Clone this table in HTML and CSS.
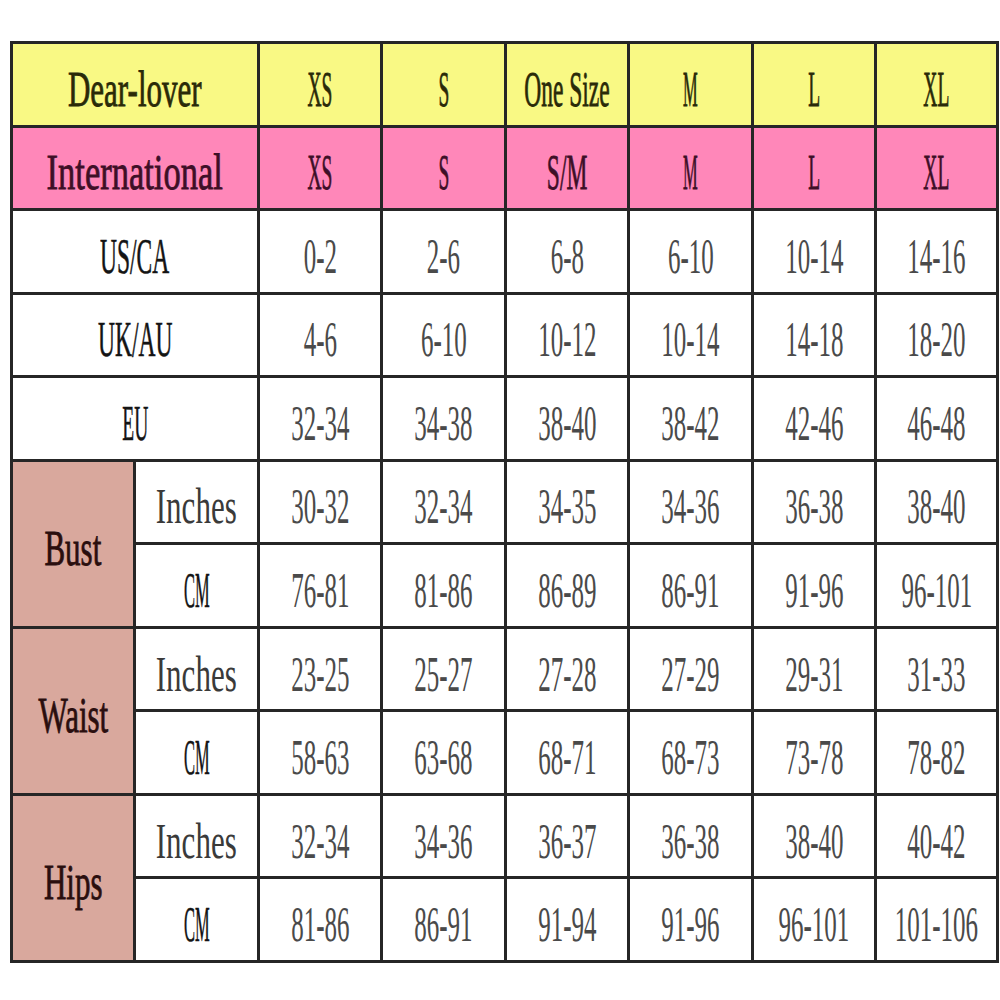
FILE: index.html
```html
<!DOCTYPE html>
<html lang="en">
<head>
<meta charset="utf-8">
<title>Size Chart</title>
<link rel="stylesheet" href="styles.css">
</head>
<body>
<div class="chart">
  <div class="cell yellow span2"><span class="t w">Dear-lover</span></div>
  <div class="cell yellow"><span class="t c2">XS</span></div>
  <div class="cell yellow"><span class="t c2">S</span></div>
  <div class="cell yellow"><span class="t c1">One Size</span></div>
  <div class="cell yellow"><span class="t m">M</span></div>
  <div class="cell yellow"><span class="t c2">L</span></div>
  <div class="cell yellow"><span class="t c2">XL</span></div>

  <div class="cell pink span2"><span class="t wide">International</span></div>
  <div class="cell pink"><span class="t c2">XS</span></div>
  <div class="cell pink"><span class="t c2">S</span></div>
  <div class="cell pink"><span class="t c1">S/M</span></div>
  <div class="cell pink"><span class="t m">M</span></div>
  <div class="cell pink"><span class="t c2">L</span></div>
  <div class="cell pink"><span class="t c2">XL</span></div>

  <div class="cell label span2"><span class="t c1">US/CA</span></div>
  <div class="cell"><span class="t n">0-2</span></div>
  <div class="cell"><span class="t n">2-6</span></div>
  <div class="cell"><span class="t n">6-8</span></div>
  <div class="cell"><span class="t n">6-10</span></div>
  <div class="cell"><span class="t n">10-14</span></div>
  <div class="cell"><span class="t n">14-16</span></div>

  <div class="cell label span2"><span class="t c1">UK/AU</span></div>
  <div class="cell"><span class="t n">4-6</span></div>
  <div class="cell"><span class="t n">6-10</span></div>
  <div class="cell"><span class="t n">10-12</span></div>
  <div class="cell"><span class="t n">10-14</span></div>
  <div class="cell"><span class="t n">14-18</span></div>
  <div class="cell"><span class="t n">18-20</span></div>

  <div class="cell label span2"><span class="t c2">EU</span></div>
  <div class="cell"><span class="t n">32-34</span></div>
  <div class="cell"><span class="t n">34-38</span></div>
  <div class="cell"><span class="t n">38-40</span></div>
  <div class="cell"><span class="t n">38-42</span></div>
  <div class="cell"><span class="t n">42-46</span></div>
  <div class="cell"><span class="t n">46-48</span></div>

  <div class="cell group"><span class="t w">Bust</span></div>
  <div class="cell unit"><span class="t w">Inches</span></div>
  <div class="cell"><span class="t n">30-32</span></div>
  <div class="cell"><span class="t n">32-34</span></div>
  <div class="cell"><span class="t n">34-35</span></div>
  <div class="cell"><span class="t n">34-36</span></div>
  <div class="cell"><span class="t n">36-38</span></div>
  <div class="cell"><span class="t n">38-40</span></div>
  <div class="cell label"><span class="t m">CM</span></div>
  <div class="cell"><span class="t n">76-81</span></div>
  <div class="cell"><span class="t n">81-86</span></div>
  <div class="cell"><span class="t n">86-89</span></div>
  <div class="cell"><span class="t n">86-91</span></div>
  <div class="cell"><span class="t n">91-96</span></div>
  <div class="cell"><span class="t n">96-101</span></div>

  <div class="cell group"><span class="t w">Waist</span></div>
  <div class="cell unit"><span class="t w">Inches</span></div>
  <div class="cell"><span class="t n">23-25</span></div>
  <div class="cell"><span class="t n">25-27</span></div>
  <div class="cell"><span class="t n">27-28</span></div>
  <div class="cell"><span class="t n">27-29</span></div>
  <div class="cell"><span class="t n">29-31</span></div>
  <div class="cell"><span class="t n">31-33</span></div>
  <div class="cell label"><span class="t m">CM</span></div>
  <div class="cell"><span class="t n">58-63</span></div>
  <div class="cell"><span class="t n">63-68</span></div>
  <div class="cell"><span class="t n">68-71</span></div>
  <div class="cell"><span class="t n">68-73</span></div>
  <div class="cell"><span class="t n">73-78</span></div>
  <div class="cell"><span class="t n">78-82</span></div>

  <div class="cell group"><span class="t w">Hips</span></div>
  <div class="cell unit"><span class="t w">Inches</span></div>
  <div class="cell"><span class="t n">32-34</span></div>
  <div class="cell"><span class="t n">34-36</span></div>
  <div class="cell"><span class="t n">36-37</span></div>
  <div class="cell"><span class="t n">36-38</span></div>
  <div class="cell"><span class="t n">38-40</span></div>
  <div class="cell"><span class="t n">40-42</span></div>
  <div class="cell label"><span class="t m">CM</span></div>
  <div class="cell"><span class="t n">81-86</span></div>
  <div class="cell"><span class="t n">86-91</span></div>
  <div class="cell"><span class="t n">91-94</span></div>
  <div class="cell"><span class="t n">91-96</span></div>
  <div class="cell"><span class="t n">96-101</span></div>
  <div class="cell"><span class="t n">101-106</span></div>
</div>
</body>
</html>
```

FILE: styles.css
```css
html, body {
  margin: 0;
  padding: 0;
  background: #ffffff;
}

body {
  width: 1000px;
  height: 1000px;
  overflow: hidden;
  font-family: "Liberation Serif", "DejaVu Serif", serif;
}

.chart {
  margin: 41px 0 0 10px;
  width: 989px;
  height: 922px;
  box-sizing: border-box;
  display: grid;
  grid-template-columns: 120px 121px 120px 121px 120px 121px 120px 119px;
  grid-template-rows: repeat(11, 1fr);
  gap: 3px;
  padding: 3px;
  background: #262626;
}

.cell {
  background: #ffffff;
  display: flex;
  align-items: center;
  justify-content: center;
  overflow: visible;
  padding-top: 9px;
  box-sizing: border-box;
  color: #4a4a4a;
}

.span2 { grid-column: span 2; }

.group {
  grid-row: span 2;
  background: #d9a89d;
  color: #2a0e0e;
  -webkit-text-stroke: 0.8px #2a0e0e;
}

.yellow {
  background: #f9f984;
  color: #2a2a08;
  -webkit-text-stroke: 0.8px #2a2a08;
}

.pink {
  background: #ff87b9;
  color: #3e0f27;
  -webkit-text-stroke: 0.8px #3e0f27;
}

.label {
  color: #141414;
  -webkit-text-stroke: 0.6px #141414;
}

.unit { color: #3a3a3a; }

.t {
  display: inline-block;
  white-space: nowrap;
  font-size: 50px;
  line-height: 1;
  transform-origin: center center;
}

.n { transform: scaleX(0.5); }
.w { transform: scaleX(0.62); }
.wide { transform: scaleX(0.69); }
.c1 { transform: scaleX(0.47); }
.c2 { transform: scaleX(0.39); }
.m { transform: scaleX(0.33); }
```
